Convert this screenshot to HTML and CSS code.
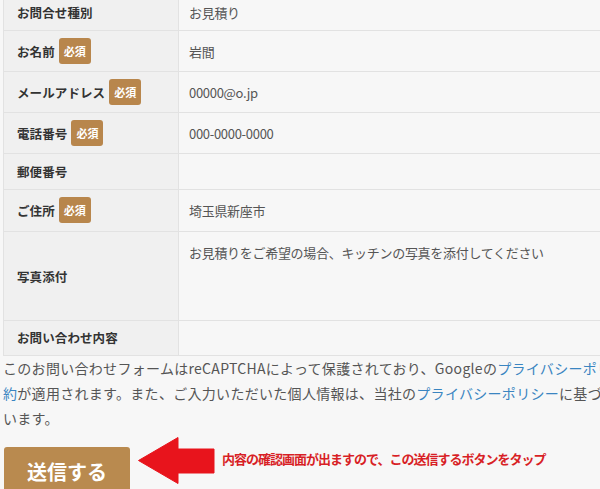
FILE: index.html
```html
<!DOCTYPE html>
<html lang="ja">
<head>
<meta charset="utf-8">
<title>お問い合わせ</title>
<link rel="stylesheet" href="styles.css">
</head>
<body>
<div class="page">
  <table class="form-table">
    <tr>
      <th><div class="label">お問合せ種別</div></th>
      <td>お見積り</td>
    </tr>
    <tr>
      <th><div class="label">お名前<span class="req">必須</span></div></th>
      <td>岩間</td>
    </tr>
    <tr>
      <th><div class="label">メールアドレス<span class="req">必須</span></div></th>
      <td>00000@o.jp</td>
    </tr>
    <tr>
      <th><div class="label">電話番号<span class="req">必須</span></div></th>
      <td>000-0000-0000</td>
    </tr>
    <tr>
      <th><div class="label">郵便番号</div></th>
      <td></td>
    </tr>
    <tr class="addr">
      <th><div class="label">ご住所<span class="req">必須</span></div></th>
      <td>埼玉県新座市</td>
    </tr>
    <tr class="tall">
      <th><div class="label">写真添付</div></th>
      <td class="top">お見積りをご希望の場合、キッチンの写真を添付してください</td>
    </tr>
    <tr class="last">
      <th><div class="label">お問い合わせ内容</div></th>
      <td></td>
    </tr>
  </table>

  <p class="notice">このお問い合わせフォームはreCAPTCHAによって保護されており、Googleの<a href="#">プライバシーポリシー</a>と<a href="#">利用規</a><br><a href="#">約</a>が適用されます。また、ご入力いただいた個人情報は、当社の<a href="#">プライバシーポリシー</a>に基づき適切に管理して<br>います。</p>

  <div class="submit-row">
    <button class="submit" type="button">送信する</button>
    <svg class="arrow" width="77" height="47" viewBox="0 0 77 47" aria-hidden="true">
      <polygon points="0.5,23.5 40,0.5 40,12 76,12 76,36 40,36 40,46.5" fill="#e8141c" stroke="#e8141c" stroke-width="1" stroke-linejoin="round"/>
    </svg>
    <span class="hint">内容の確認画面が出ますので、この送信するボタンをタップ</span>
  </div>
</div>
</body>
</html>
```

FILE: styles.css
```css
html, body {
  margin: 0;
  padding: 0;
  overflow: hidden;
  background: #f7f7f7;
}

body {
  font-family: "Noto Sans CJK JP", "Noto Sans", sans-serif;
  color: #555;
}

.page {
  width: 720px;
  padding-left: 3px;
}

.form-table {
  width: 680px;
  margin-top: -6px;
  border-collapse: collapse;
}

.form-table th,
.form-table td {
  border: 1px solid #e2e2e2;
  text-align: left;
  vertical-align: middle;
}

.form-table th {
  width: 161px;
  padding: 7px 0 7px 13px;
  background: #f0f0f0;
  color: #333;
  font-size: 12.5px;
  font-weight: 700;
  letter-spacing: 0.1px;
}

.label {
  display: flex;
  align-items: center;
  gap: 4px;
  min-height: 21px;
  line-height: 21px;
}

.req {
  display: inline-block;
  background: #b8864c;
  color: #fff;
  font-size: 11px;
  font-weight: 700;
  line-height: 18px;
  padding: 4px 5px;
  border-radius: 3px;
  letter-spacing: 0;
}

.form-table td {
  padding: 7px 10px;
  background: #f7f7f7;
  font-size: 13px;
  line-height: 21px;
  letter-spacing: -0.3px;
  color: #555;
}

.addr th,
.addr td {
  padding-top: 7px;
  padding-bottom: 8px;
}

.tall th,
.tall td {
  height: 71px;
}

.tall td.top {
  vertical-align: top;
  padding-top: 10px;
}

.last th,
.last td {
  padding-top: 6px;
  padding-bottom: 7px;
}

.notice {
  margin: 0;
  font-size: 14px;
  line-height: 25px;
  letter-spacing: 0.3px;
  color: #555;
  white-space: nowrap;
}

.notice a {
  color: #3a85c1;
  text-decoration: none;
}

.submit-row {
  display: flex;
  align-items: flex-start;
  margin-top: 16px;
  padding-left: 1px;
}

.submit {
  width: 126px;
  height: 46px;
  border: none;
  border-radius: 3px;
  background: #b98a4f;
  color: #fff;
  font-family: "Noto Sans CJK JP", sans-serif;
  font-size: 20px;
  font-weight: 700;
  padding: 2px 0 0;
}

.arrow {
  margin-left: 8px;
  margin-top: -10px;
  flex: none;
}

.hint {
  margin-left: 7px;
  margin-top: 3px;
  color: #d81f26;
  font-size: 13px;
  font-weight: 700;
  letter-spacing: -1px;
  line-height: 18px;
  white-space: nowrap;
}
```
